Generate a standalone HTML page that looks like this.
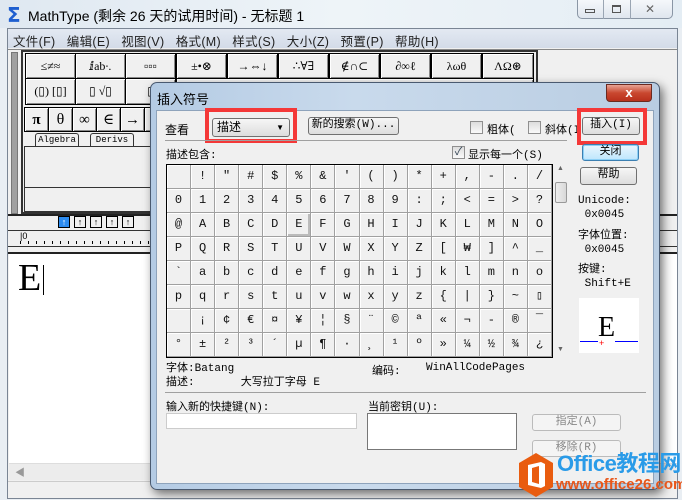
<!DOCTYPE html>
<html><head><meta charset="utf-8"><style>
*{margin:0;padding:0;box-sizing:border-box}
body{width:682px;height:500px;overflow:hidden;background:#e9eef3;font-family:"Liberation Sans","Noto Sans CJK SC",sans-serif;font-size:12px;color:#000;position:relative}
.a{position:absolute}
.mono{font-family:"Liberation Mono","Noto Sans CJK SC",monospace}
.btn{position:absolute;border:1px solid #707070;border-radius:3px;background:linear-gradient(#f6f6f6,#dddddd);text-align:center;font-size:11px;line-height:15px}
.tb{position:absolute;background:#f0f0f0;border:1px solid #000;box-shadow:inset 1px 1px 0 #fff,inset -1px -1px 0 #888;text-align:center;font-family:"Liberation Serif","DejaVu Serif",serif;font-size:12px;line-height:24px}
#grid{position:absolute;left:166px;top:164px;width:387px;height:194px;border:1px solid #000;background:#f0f0f0;display:grid;grid-template-columns:repeat(16,1fr);grid-template-rows:repeat(8,1fr)}
#grid span{border-right:1px solid #a0a0a0;border-bottom:1px solid #a0a0a0;box-shadow:inset 1px 1px 0 #fff;text-align:center;font-family:"Liberation Mono","DejaVu Sans Mono",monospace;font-size:12px;line-height:23px;color:#111}
.red{position:absolute;border:4px solid #f43838}
.cb{position:absolute;width:13px;height:13px;border:1px solid #8f8f8f;background:linear-gradient(#ddd,#fafafa)}
</style></head><body>
<div class="a" style="left:0;top:0;width:682px;height:28px;background:linear-gradient(90deg,#dfe8f1,#eef4f8 50%,#e4edf4)"></div>
<div class="a" style="left:7px;top:3px;font-size:20px;color:#1f5fd0;font-weight:bold;font-family:'DejaVu Sans',sans-serif">Σ</div>
<div class="a" style="left:28px;top:6px;font-size:14px">MathType (剩余 26 天的试用时间) - 无标题 1</div>
<div class="a" style="left:577px;top:0;width:96px;height:19px;border:1px solid #8a96a5;border-top:none;border-radius:0 0 5px 5px;background:linear-gradient(#f5f8fb,#dfe6ee)"></div>
<div class="a" style="left:603px;top:0;width:1px;height:19px;background:#9aa5b3"></div>
<div class="a" style="left:630px;top:0;width:1px;height:19px;background:#9aa5b3"></div>
<div class="a" style="left:585px;top:9px;width:10px;height:4px;border:1px solid #555"></div>
<div class="a" style="left:612px;top:5px;width:9px;height:8px;border:1px solid #555;box-shadow:inset 0 1px 0 #555"></div>
<div class="a" style="left:645px;top:2px;font-size:12px;color:#666">✕</div>
<div class="a" style="left:7px;top:28px;width:671px;height:471px;background:#f0f0f0;border:1px solid #7a8594"></div>
<div class="a" style="left:8px;top:29px;width:669px;height:19px;background:linear-gradient(#e3e9f2,#d3dbe8)"></div>
<div class="a" style="left:13px;top:31px;font-size:12.5px;color:#222;letter-spacing:0.3px">文件(F)&nbsp;&nbsp;&nbsp;编辑(E)&nbsp;&nbsp;&nbsp;视图(V)&nbsp;&nbsp;&nbsp;格式(M)&nbsp;&nbsp;&nbsp;样式(S)&nbsp;&nbsp;&nbsp;大小(Z)&nbsp;&nbsp;&nbsp;预置(P)&nbsp;&nbsp;&nbsp;帮助(H)</div>
<div class="a" style="left:8px;top:49px;width:669px;height:1px;background:#888"></div>
<div class="a" style="left:11px;top:52px;width:7px;height:162px;background:#a0a0a0;border:1px solid #777"></div>
<div class="a" style="left:21px;top:50px;width:517px;height:164px;border:2px solid #333;background:#f0f0f0"></div>
<div class="tb" style="left:25px;top:53px;width:51px;height:26px">≤≠≈</div>
<div class="tb" style="left:75px;top:53px;width:51px;height:26px">ⅈab∙.</div>
<div class="tb" style="left:125px;top:53px;width:51px;height:26px">▫▫▫</div>
<div class="tb" style="left:176px;top:53px;width:51px;height:26px">±•⊗</div>
<div class="tb" style="left:227px;top:53px;width:51px;height:26px">→⇔↓</div>
<div class="tb" style="left:278px;top:53px;width:51px;height:26px">∴∀∃</div>
<div class="tb" style="left:329px;top:53px;width:51px;height:26px">∉∩⊂</div>
<div class="tb" style="left:380px;top:53px;width:51px;height:26px">∂∞ℓ</div>
<div class="tb" style="left:431px;top:53px;width:51px;height:26px">λωθ</div>
<div class="tb" style="left:482px;top:53px;width:52px;height:26px">ΛΩ⊛</div>
<div class="tb" style="left:25px;top:78px;width:51px;height:27px">(▯) [▯]</div>
<div class="tb" style="left:75px;top:78px;width:51px;height:27px">▯ √▯</div>
<div class="tb" style="left:125px;top:78px;width:51px;height:27px">▯</div>
<div class="tb" style="left:176px;top:78px;width:358px;height:27px"></div>
<div class="tb" style="left:24px;top:107px;width:25px;height:25px;font-weight:bold;font-size:15px">π</div>
<div class="tb" style="left:48px;top:107px;width:25px;height:25px;font-size:16px">θ</div>
<div class="tb" style="left:72px;top:107px;width:25px;height:25px;font-size:15px">∞</div>
<div class="tb" style="left:96px;top:107px;width:25px;height:25px;font-size:15px">∈</div>
<div class="tb" style="left:120px;top:107px;width:25px;height:25px;font-size:15px">→</div>
<div class="tb" style="left:144px;top:107px;width:25px;height:25px"></div>
<div class="a mono" style="left:35px;top:133px;width:44px;height:13px;border:1px solid #333;border-bottom:none;border-radius:3px 3px 0 0;font-size:9px;text-align:center;line-height:12px">Algebra</div>
<div class="a mono" style="left:90px;top:133px;width:44px;height:13px;border:1px solid #333;border-bottom:none;border-radius:3px 3px 0 0;font-size:9px;text-align:center;line-height:12px">Derivs</div>
<div class="a" style="left:24px;top:146px;width:512px;height:42px;border:1px solid #333;background:#f0f0f0"></div>
<div class="a" style="left:24px;top:187px;width:512px;height:25px;border:1px solid #333;background:#f0f0f0"></div>
<div class="a" style="left:8px;top:214px;width:669px;height:2px;background:#222"></div>
<div class="a" style="left:58px;top:216px;width:12px;height:12px;background:#2d8cf0;border:1px solid #000;color:#fff;font-size:9px;text-align:center;line-height:10px">↑</div>
<div class="a" style="left:74px;top:216px;width:12px;height:12px;border:1px solid #000;font-size:9px;text-align:center;line-height:10px">↑</div>
<div class="a" style="left:90px;top:216px;width:12px;height:12px;border:1px solid #000;font-size:9px;text-align:center;line-height:10px">↑</div>
<div class="a" style="left:106px;top:216px;width:12px;height:12px;border:1px solid #000;font-size:9px;text-align:center;line-height:10px">↑</div>
<div class="a" style="left:122px;top:216px;width:12px;height:12px;border:1px solid #000;font-size:9px;text-align:center;line-height:10px">↑</div>
<div class="a" style="left:8px;top:230px;width:669px;height:1px;background:#333"></div>
<div class="a" style="left:20px;top:231px;font-size:9px">|0</div>
<div class="a" style="left:20px;top:241px;width:600px;height:3px;background:repeating-linear-gradient(90deg,#000 0 1px,transparent 1px 8px)"></div>
<div class="a" style="left:8px;top:246px;width:669px;height:1px;background:#333"></div>
<div class="a" style="left:8px;top:252px;width:669px;height:2px;background:#222"></div>
<div class="a" style="left:9px;top:254px;width:668px;height:209px;background:#fff"></div>
<div class="a" style="left:18px;top:258px;font-family:'Liberation Serif',serif;font-size:38px;line-height:40px">E</div>
<div class="a" style="left:43px;top:265px;width:1px;height:30px;background:#000"></div>
<div class="a" style="left:9px;top:463px;width:668px;height:17px;background:#ececec;border-top:1px solid #ddd"></div>
<div class="a" style="left:15px;top:464px;color:#999;font-size:10px">◀</div>
<div class="a" style="left:8px;top:481px;width:669px;height:1px;background:#ccc"></div>
<div class="a" style="left:150px;top:82px;width:510px;height:408px;border-radius:7px;background:linear-gradient(90deg,#b4cbe4,#c9daec 40%,#b9cde2);border:1px solid #4a5a70;box-shadow:3px 4px 10px rgba(0,0,0,.55)"></div>
<div class="a" style="left:157px;top:89px;font-size:13px">插入符号</div>
<div class="a" style="left:606px;top:84px;width:46px;height:18px;border:1px solid #6b2a20;border-radius:0 0 4px 4px;background:linear-gradient(#e8a394,#c9472f 50%,#b8301c);color:#fff;font-weight:bold;text-align:center;font-size:13px;line-height:16px">x</div>
<div class="a" style="left:156px;top:110px;width:498px;height:374px;background:#f0f0f0;border:1px solid #8ea3bb"></div>
<div class="a" style="left:165px;top:121px">查看</div>
<div class="btn" style="left:212px;top:118px;width:78px;height:19px;text-align:left;padding-left:4px;font-size:12px;line-height:17px">描述<span style="position:absolute;right:5px;top:0;font-size:8px">▼</span></div>
<div class="red" style="left:205px;top:108px;width:92px;height:35px"></div>
<div class="btn mono" style="left:308px;top:117px;width:91px;height:18px">新的搜索(W)...</div>
<div class="cb" style="left:470px;top:121px"></div>
<div class="a mono" style="left:487px;top:121px;font-size:11px">粗体(</div>
<div class="cb" style="left:528px;top:121px"></div>
<div class="a mono" style="left:545px;top:121px;font-size:11px">斜体(I</div>
<div class="btn mono" style="left:582px;top:117px;width:58px;height:18px">插入(I)</div>
<div class="red" style="left:577px;top:108px;width:70px;height:37px"></div>
<div class="a" style="left:165px;top:140px;width:402px;height:1px;background:#a0a0a0"></div>
<div class="a mono" style="left:166px;top:146px;font-size:11px">描述包含:</div>
<div class="cb" style="left:452px;top:146px;font-size:11px;line-height:11px;color:#345;text-align:center">✓</div>
<div class="a mono" style="left:468px;top:146px;font-size:11px">显示每一个(S)</div>
<div class="btn mono" style="left:582px;top:144px;width:57px;height:17px;border-color:#3c7fb1;box-shadow:inset 0 0 0 1px #8dd0f6;background:linear-gradient(#eaf6fd,#bee6fd)">关闭</div>
<div id="grid">
<span></span><span>!</span><span>"</span><span>#</span><span>$</span><span>%</span><span>&amp;</span><span>'</span><span>(</span><span>)</span><span>*</span><span>+</span><span>,</span><span>-</span><span>.</span><span>/</span>
<span>0</span><span>1</span><span>2</span><span>3</span><span>4</span><span>5</span><span>6</span><span>7</span><span>8</span><span>9</span><span>:</span><span>;</span><span>&lt;</span><span>=</span><span>&gt;</span><span>?</span>
<span>@</span><span>A</span><span>B</span><span>C</span><span>D</span><span style="box-shadow:inset 1px 1px 0 #fff,inset -2px -2px 0 #bbb">E</span><span>F</span><span>G</span><span>H</span><span>I</span><span>J</span><span>K</span><span>L</span><span>M</span><span>N</span><span>O</span>
<span>P</span><span>Q</span><span>R</span><span>S</span><span>T</span><span>U</span><span>V</span><span>W</span><span>X</span><span>Y</span><span>Z</span><span>[</span><span>₩</span><span>]</span><span>^</span><span>_</span>
<span>`</span><span>a</span><span>b</span><span>c</span><span>d</span><span>e</span><span>f</span><span>g</span><span>h</span><span>i</span><span>j</span><span>k</span><span>l</span><span>m</span><span>n</span><span>o</span>
<span>p</span><span>q</span><span>r</span><span>s</span><span>t</span><span>u</span><span>v</span><span>w</span><span>x</span><span>y</span><span>z</span><span>{</span><span>|</span><span>}</span><span>~</span><span>▯</span>
<span></span><span>¡</span><span>¢</span><span>€</span><span>¤</span><span>¥</span><span>¦</span><span>§</span><span>¨</span><span>©</span><span>ª</span><span>«</span><span>¬</span><span>-</span><span>®</span><span>¯</span>
<span>°</span><span>±</span><span>²</span><span>³</span><span>´</span><span>µ</span><span>¶</span><span>·</span><span>¸</span><span>¹</span><span>º</span><span>»</span><span>¼</span><span>½</span><span>¾</span><span>¿</span>
</div>
<div class="a" style="left:554px;top:164px;width:14px;height:194px;background:#f0f0f0"></div>
<div class="a" style="left:557px;top:165px;font-size:7px;color:#666">▲</div>
<div class="a" style="left:555px;top:182px;width:12px;height:21px;border:1px solid #999;border-radius:2px;background:linear-gradient(90deg,#eee,#d8d8d8)"></div>
<div class="a" style="left:557px;top:346px;font-size:7px;color:#666">▼</div>
<div class="btn mono" style="left:580px;top:167px;width:57px;height:18px">帮助</div>
<div class="a mono" style="left:578px;top:194px;font-size:11px;line-height:14px">Unicode:<br>&nbsp;0x0045</div>
<div class="a mono" style="left:578px;top:229px;font-size:11px;line-height:14px">字体位置:<br>&nbsp;0x0045</div>
<div class="a mono" style="left:578px;top:263px;font-size:11px;line-height:14px">按键:<br>&nbsp;Shift+E</div>
<div class="a" style="left:579px;top:298px;width:60px;height:55px;background:#fff"></div>
<div class="a" style="left:580px;top:341px;width:58px;height:1px;background:#00f"></div>
<div class="a" style="left:598px;top:313px;font-family:'Liberation Serif',serif;font-size:28px;line-height:30px;background:#fff">E</div>
<div class="a" style="left:599px;top:338px;color:red;font-size:9px">+</div>
<div class="a mono" style="left:166px;top:362px;font-size:11px;line-height:14px">字体:Batang<br>描述:&nbsp;&nbsp;&nbsp;&nbsp;&nbsp;&nbsp;&nbsp;大写拉丁字母 E</div>
<div class="a mono" style="left:372px;top:362px;font-size:11px">编码:</div>
<div class="a mono" style="left:426px;top:362px;font-size:11px">WinAllCodePages</div>
<div class="a" style="left:165px;top:392px;width:481px;height:1px;background:#a0a0a0"></div>
<div class="a mono" style="left:166px;top:398px;font-size:11px">输入新的快捷键(N):</div>
<div class="a" style="left:166px;top:413px;width:191px;height:16px;background:#fff;border:1px solid #ccc"></div>
<div class="a mono" style="left:368px;top:398px;font-size:11px">当前密钥(U):</div>
<div class="a" style="left:367px;top:413px;width:150px;height:37px;background:#fff;border:1px solid #777"></div>
<div class="btn mono" style="left:532px;top:414px;width:89px;height:17px;color:#888;border-color:#bbb;background:#f4f4f4">指定(A)</div>
<div class="btn mono" style="left:532px;top:440px;width:89px;height:17px;color:#888;border-color:#bbb;background:#f4f4f4">移除(R)</div>
<svg class="a" style="left:517px;top:452px" width="38" height="46" viewBox="0 0 38 46"><polygon points="19,1 36,11 36,35 19,45 2,35 2,11" fill="#e95c0f"/><path d="M11 13 L24 10 L28 12 L28 34 L24 36 L11 33 Z" fill="#fff"/><path d="M15 16 L22 14 L22 32 L15 30 Z" fill="#e95c0f"/></svg>
<div class="a" style="left:557px;top:451px;font-size:22px;font-weight:bold;color:#2a9be8;line-height:26px;letter-spacing:-0.5px">Office教程网</div>
<div class="a" style="left:556px;top:476px;font-size:15px;font-weight:bold;color:#e8561a;line-height:17px">www.office26.com</div>
</body></html>
